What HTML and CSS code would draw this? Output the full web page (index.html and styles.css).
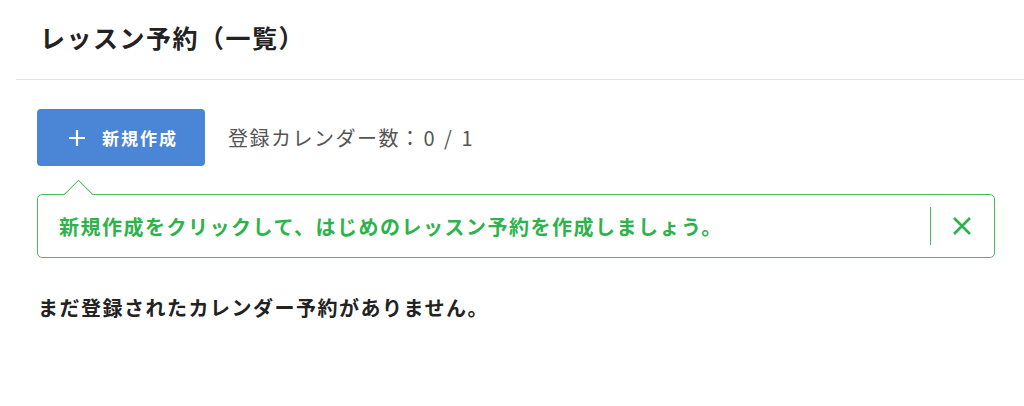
FILE: index.html
```html
<!DOCTYPE html>
<html lang="ja">
<head>
    <meta charset="utf-8">
    <title>レッスン予約（一覧）</title>
    <link rel="stylesheet" href="styles.css">
</head>
<body>
    <header class="page-header">
        <h1>レッスン予約（一覧）</h1>
    </header>

    <main class="content">
        <div class="toolbar">
            <button class="btn-create">
                <svg class="plus" width="18" height="18" viewBox="0 0 18 18">
                    <path d="M9 1v16M1 9h16" stroke="#fff" stroke-width="2.2" fill="none"/>
                </svg>
                <span>新規作成</span>
            </button>
            <span class="count">登録カレンダー数：<span class="num">0 / 1</span></span>
        </div>

        <div class="callout">
            <p>新規作成をクリックして、はじめのレッスン予約を作成しましょう。</p>
            <button class="callout-close" aria-label="閉じる">
                <svg width="20" height="20" viewBox="0 0 20 20">
                    <path d="M2 2l16 16M18 2L2 18" stroke="#2db34b" stroke-width="2.6" fill="none"/>
                </svg>
            </button>
        </div>

        <p class="empty">まだ登録されたカレンダー予約がありません。</p>
    </main>
</body>
</html>
```

FILE: styles.css
```css
body {
    margin: 0;
    font-family: "Noto Sans CJK JP", "Noto Sans", sans-serif;
    color: #222;
    background: #fff;
}
.page-header {
    margin-left: 16px;
    height: 80px;
    border-bottom: 1px solid #e2e2e2;
    display: flex;
    align-items: center;
    padding-left: 24px;
    padding-bottom: 6px;
    box-sizing: border-box;
}
.page-header h1 {
    margin: 0;
    font-size: 25px;
    font-weight: 700;
    letter-spacing: 1.5px;
    color: #222;
}
.content {
    padding: 29px 29px 0 37px;
}
.toolbar {
    display: flex;
    align-items: center;
    gap: 23px;
}
.btn-create {
    width: 168px;
    height: 57px;
    background: #4a85d6;
    border: none;
    border-radius: 4px;
    color: #fff;
    display: flex;
    align-items: center;
    justify-content: center;
    gap: 16px;
    font-family: inherit;
    font-size: 17px;
    font-weight: 700;
    letter-spacing: 2px;
    padding: 0 0 0 4px;
}
.count {
    font-size: 20px;
    color: #555;
    letter-spacing: 1.5px;
}
.count .num {
    margin-left: 2px;
    word-spacing: 2px;
}
.callout {
    position: relative;
    margin-top: 28px;
    height: 64px;
    box-sizing: border-box;
    border: 1px solid #4cbb5c;
    border-radius: 5px;
    display: flex;
    align-items: center;
    padding-left: 21px;
}
.callout::before {
    content: "";
    position: absolute;
    left: 30px;
    top: -11px;
    width: 20px;
    height: 20px;
    background: #fff;
    border-top: 1px solid #4cbb5c;
    border-left: 1px solid #4cbb5c;
    transform: rotate(45deg);
}
.callout p {
    flex: 1;
    margin: 0;
    font-size: 20px;
    font-weight: 700;
    letter-spacing: 1.5px;
    color: #2db34b;
}
.callout-close {
    height: 38px;
    border: none;
    border-left: 1px solid #4cbb5c;
    background: none;
    padding: 0 22px 0 21px;
    display: flex;
    align-items: center;
}
.empty {
    margin: 35px 0 0 1px;
    font-size: 20px;
    font-weight: 700;
    letter-spacing: 1.5px;
    color: #222;
}
```
